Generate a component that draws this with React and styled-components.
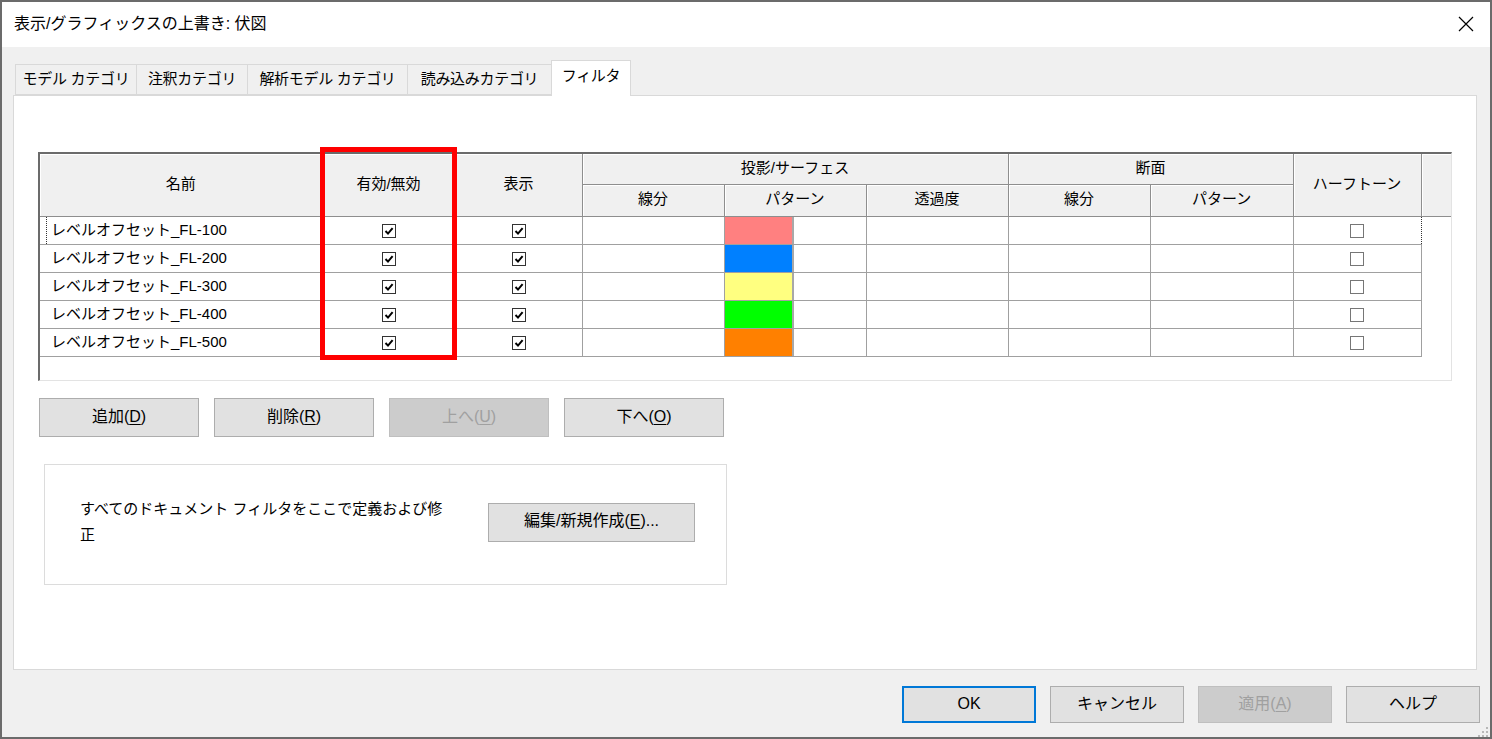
import styled, { createGlobalStyle } from "styled-components";

const GlobalStyle = createGlobalStyle`
    html, body {
        margin: 0;
        padding: 0;
        background: #ffffff;
    }
    body {
        font-family: "Liberation Sans", "Noto Sans CJK JP", sans-serif;
        color: #000;
    }
    * {
        box-sizing: border-box;
    }
`

const Window = styled.div`
    position: relative;
    width: 1492px;
    height: 739px;
    border: 2px solid #6b6b6b;
    background-color: #f0f0f0;
    display: flex;
    flex-direction: column;
    overflow: hidden;
`

const TitleBar = styled.div`
    height: 45px;
    flex-shrink: 0;
    background-color: #ffffff;
    display: flex;
    align-items: center;
    justify-content: space-between;
    padding: 0 15px 0 12px;
    font-size: 16px;
    line-height: 20px;
    padding-bottom: 2px;
`

const CloseButton = styled.div`
    width: 18px;
    height: 18px;
    display: flex;
    align-items: center;
    justify-content: center;
`

const Body = styled.div`
    flex: 1;
    display: flex;
    flex-direction: column;
    padding-top: 14px;
`

const TabBar = styled.div`
    display: flex;
    align-items: flex-end;
    padding-left: 13px;
    height: 35px;
    position: relative;
    z-index: 2;
    margin-bottom: -1px;
`

const Tab = styled.div`
    width: ${p => p.$w}px;
    height: ${p => (p.$active ? 36 : 31)}px;
    margin-right: -1px;
    border: 1px solid #d9d9d9;
    border-bottom: ${p => (p.$active ? "none" : "1px solid #d9d9d9")};
    background-color: ${p => (p.$active ? "#ffffff" : "#f0f0f0")};
    display: flex;
    align-items: center;
    justify-content: center;
    font-size: 15px;
    letter-spacing: -0.3px;
    line-height: 20px;
    padding-bottom: ${p => (p.$active ? 6 : 1)}px;
    margin-bottom: ${p => (p.$active ? 0 : 1)}px;
    white-space: nowrap;
`

const Panel = styled.div`
    margin-left: 11px;
    width: 1464px;
    height: 575px;
    border: 1px solid #d9d9d9;
    background-color: #ffffff;
    padding: 56px 0 0 24px;
    display: flex;
    flex-direction: column;
`

const GridBox = styled.div`
    position: relative;
    width: 1414px;
    height: 229px;
    border-top: 2px solid #6b6b6b;
    border-left: 2px solid #6b6b6b;
    border-right: 1px solid #e3e3e3;
    border-bottom: 1px solid #e3e3e3;
    background-color: #ffffff;
`

const Table = styled.table`
    border-collapse: collapse;
    table-layout: fixed;
    width: 1411px;
    font-size: 15px;
    line-height: 20px;
`

const Th = styled.th`
    background-color: #f0f0f0;
    font-weight: 400;
    text-align: center;
    height: ${p => p.$h || 30}px;
    padding: 0;
    border-right: 1px solid #8e8e8e;
    border-bottom: 1px solid #8e8e8e;
    box-shadow: inset 1px 1px 0 #ffffff;
    vertical-align: middle;
    padding-bottom: 2px;
`

const EmptyTh = styled(Th)`
    border-right: none;
`

const Td = styled.td`
    height: 27px;
    padding: 0;
    border-right: 1px solid #a0a0a0;
    border-bottom: 1px solid #a0a0a0;
    border-top: ${p => (p.$focus ? "1px dotted #333" : "none")};
    text-align: ${p => (p.$left ? "left" : "center")};
    vertical-align: middle;
`

const NameTd = styled(Td)`
    padding-left: 11px;
    white-space: nowrap;
    background: ${p =>
        p.$focus
            ? "repeating-linear-gradient(to bottom, #333 0 1px, transparent 1px 2px) no-repeat 6px 0 / 1px 100%"
            : "none"};
`

const EdgeTd = styled(Td)`
    border-right: ${p => (p.$focus ? "1px dotted #333" : "1px solid #a0a0a0")};
`

const BlankTd = styled.td`
    border: none;
    padding: 0;
`

const PatternCell = styled.div`
    display: flex;
    height: 27px;
`

const Swatch = styled.div`
    width: 69px;
    height: 100%;
    background-color: ${p => p.$color};
    border-right: 2px solid #a8a8a8;
`

const CheckBox = styled.span`
    display: inline-flex;
    align-items: center;
    justify-content: center;
    width: 14px;
    height: 14px;
    border: 1px solid ${p => (p.$checked ? "#333333" : "#767676")};
    background-color: #ffffff;
    vertical-align: middle;
    margin-top: -1px;
`

const Highlight = styled.div`
    position: absolute;
    left: 280px;
    top: -7px;
    width: 137px;
    height: 213px;
    border: 5px solid #ff0000;
    pointer-events: none;
`

const ButtonRow = styled.div`
    display: flex;
    gap: 15px;
    margin-top: 17px;
    margin-left: 1px;
`

const Button = styled.button`
    width: ${p => p.$w || 160}px;
    height: ${p => p.$h || 39}px;
    font-family: "Liberation Sans", "Noto Sans CJK JP", sans-serif;
    font-size: 16px;
    line-height: 20px;
    color: ${p => (p.disabled ? "#a0a0a0" : "#000000")};
    background-color: ${p => (p.disabled ? "#cccccc" : "#e1e1e1")};
    border: ${p => (p.$default ? "2px solid #0078d7" : `1px solid ${p.disabled ? "#bfbfbf" : "#adadad"}`)};
    padding: 0 0 2px 0;
    margin: 0;
    display: flex;
    align-items: center;
    justify-content: center;
    white-space: nowrap;
    & u {
        text-underline-offset: 2px;
    }
`

const GroupBox = styled.div`
    margin-top: 27px;
    margin-left: 6px;
    width: 683px;
    height: 121px;
    border: 1px solid #dcdcdc;
    display: flex;
    align-items: center;
    padding: 0 0 5px 35px;
    gap: 38px;
`

const GroupText = styled.p`
    margin: 0;
    width: 370px;
    font-size: 15px;
    line-height: 26px;
`

const Footer = styled.div`
    display: flex;
    justify-content: flex-end;
    gap: 14px;
    margin-top: 16px;
    padding-right: 10px;
`

const Grip = styled.div`
    position: absolute;
    right: 1px;
    bottom: 1px;
    width: 12px;
    height: 12px;
`

const rows = [
    { name: "レベルオフセット_FL-100", color: "#ff8080" },
    { name: "レベルオフセット_FL-200", color: "#0080ff" },
    { name: "レベルオフセット_FL-300", color: "#ffff80" },
    { name: "レベルオフセット_FL-400", color: "#00ff00" },
    { name: "レベルオフセット_FL-500", color: "#ff8000" },
]

const tabs = [
    { label: "モデル カテゴリ", w: 122 },
    { label: "注釈カテゴリ", w: 112 },
    { label: "解析モデル カテゴリ", w: 161 },
    { label: "読み込みカテゴリ", w: 145 },
    { label: "フィルタ", w: 80, active: true },
]

const Check = ({ checked }) => (
    <CheckBox $checked={checked}>
        {checked && (
            <svg width="10" height="10" viewBox="0 0 10 10">
                <path d="M1.5 5 L4 7.6 L8.6 2.2" fill="none" stroke="#000" strokeWidth="2" />
            </svg>
        )}
    </CheckBox>
)

const App = () => {
    return (
        <>
            <GlobalStyle />
            <Window>
                <TitleBar>
                    <span>表示/グラフィックスの上書き: 伏図</span>
                    <CloseButton>
                        <svg width="16" height="16" viewBox="0 0 16 16">
                            <path d="M1 1 L15 15 M15 1 L1 15" stroke="#000" strokeWidth="1.2" />
                        </svg>
                    </CloseButton>
                </TitleBar>
                <Body>
                    <TabBar>
                        {tabs.map(t => (
                            <Tab key={t.label} $w={t.w} $active={t.active}>{t.label}</Tab>
                        ))}
                    </TabBar>
                    <Panel>
                        <GridBox>
                            <Table>
                                <colgroup>
                                    <col style={{ width: 282 }} />
                                    <col style={{ width: 133 }} />
                                    <col style={{ width: 127 }} />
                                    <col style={{ width: 142 }} />
                                    <col style={{ width: 142 }} />
                                    <col style={{ width: 142 }} />
                                    <col style={{ width: 142 }} />
                                    <col style={{ width: 143 }} />
                                    <col style={{ width: 128 }} />
                                    <col style={{ width: 30 }} />
                                </colgroup>
                                <thead>
                                    <tr>
                                        <Th rowSpan={2}>名前</Th>
                                        <Th rowSpan={2}>有効/無効</Th>
                                        <Th rowSpan={2}>表示</Th>
                                        <Th colSpan={3}>投影/サーフェス</Th>
                                        <Th colSpan={2}>断面</Th>
                                        <Th rowSpan={2}>ハーフトーン</Th>
                                        <EmptyTh rowSpan={2} />
                                    </tr>
                                    <tr>
                                        <Th $h={32}>線分</Th>
                                        <Th $h={32}>パターン</Th>
                                        <Th $h={32}>透過度</Th>
                                        <Th $h={32}>線分</Th>
                                        <Th $h={32}>パターン</Th>
                                    </tr>
                                </thead>
                                <tbody>
                                    {rows.map((r, i) => (
                                        <tr key={r.name}>
                                            <NameTd $left $focus={i === 0}>{r.name}</NameTd>
                                            <Td $focus={i === 0}><Check checked /></Td>
                                            <Td $focus={i === 0}><Check checked /></Td>
                                            <Td $focus={i === 0} />
                                            <Td $focus={i === 0}>
                                                <PatternCell>
                                                    <Swatch $color={r.color} />
                                                </PatternCell>
                                            </Td>
                                            <Td $focus={i === 0} />
                                            <Td $focus={i === 0} />
                                            <Td $focus={i === 0} />
                                            <EdgeTd $focus={i === 0}><Check /></EdgeTd>
                                            <BlankTd />
                                        </tr>
                                    ))}
                                </tbody>
                            </Table>
                            <Highlight />
                        </GridBox>
                        <ButtonRow>
                            <Button>追加(<u>D</u>)</Button>
                            <Button>削除(<u>R</u>)</Button>
                            <Button disabled>上へ(<u>U</u>)</Button>
                            <Button>下へ(<u>O</u>)</Button>
                        </ButtonRow>
                        <GroupBox>
                            <GroupText>すべてのドキュメント フィルタをここで定義および修正</GroupText>
                            <Button $w={207}>編集/新規作成(<u>E</u>)...</Button>
                        </GroupBox>
                    </Panel>
                    <Footer>
                        <Button $w={134} $h={37} $default>OK</Button>
                        <Button $w={134} $h={37}>キャンセル</Button>
                        <Button $w={134} $h={37} disabled>適用(<u>A</u>)</Button>
                        <Button $w={134} $h={37}>ヘルプ</Button>
                    </Footer>
                </Body>
                <Grip>
                    <svg width="12" height="12" viewBox="0 0 12 12">
                        <g fill="#b8b8b8">
                            <rect x="9" y="1" width="2" height="2" />
                            <rect x="5" y="5" width="2" height="2" />
                            <rect x="9" y="5" width="2" height="2" />
                            <rect x="1" y="9" width="2" height="2" />
                            <rect x="5" y="9" width="2" height="2" />
                            <rect x="9" y="9" width="2" height="2" />
                        </g>
                    </svg>
                </Grip>
            </Window>
        </>
    )
}

export default App;
